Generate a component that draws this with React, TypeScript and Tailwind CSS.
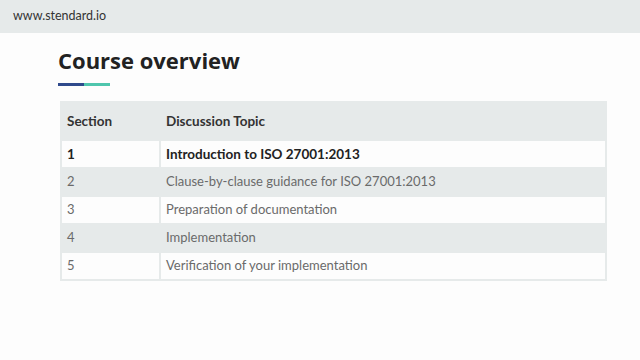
import React from 'react';

const rows = [
  { section: '1', topic: 'Introduction to ISO 27001:2013', bold: true },
  { section: '2', topic: 'Clause-by-clause guidance for ISO 27001:2013' },
  { section: '3', topic: 'Preparation of documentation' },
  { section: '4', topic: 'Implementation' },
  { section: '5', topic: 'Verification of your implementation' },
];

export default function App() {
  return (
    <div className="w-[640px] h-[360px] bg-[#fdfdfd] overflow-hidden" style={{ fontFamily: 'Lato, "Open Sans", sans-serif' }}>
      {/* Top bar */}
      <div className="h-[33px] bg-[#e6eaea] flex items-center pl-[13px]">
        <span className="text-[12.5px] text-[#333]">www.stendard.io</span>
      </div>

      <div className="pl-[58px] pt-[12px]">
        <h1 className="text-[22px] leading-[30px] font-bold text-[#222]" style={{ fontFamily: '"Open Sans", Lato, sans-serif' }}>
          Course overview
        </h1>
        <div className="flex mt-[8px]">
          <div className="w-[26px] h-[3px] bg-[#2f4a8c]" />
          <div className="w-[26px] h-[3px] bg-[#4fc6ad]" />
        </div>
      </div>

      {/* Table */}
      <div className="ml-[60px] mt-[15px] w-[547px] bg-[#e6eaea] p-[2px] flex flex-col gap-[2px]">
        <div className="flex gap-[2px] h-[36px] items-center text-[13.5px] font-bold text-[#333]">
          <div className="w-[97px] pl-[5px]">Section</div>
          <div className="flex-1 pl-[5px]">Discussion Topic</div>
        </div>
        {rows.map((r, i) => {
          const white = i % 2 === 0;
          const cell = white ? 'bg-[#fdfdfd]' : 'bg-[#e6eaea]';
          const txt = r.bold ? 'text-[13.5px] font-bold text-[#222]' : 'text-[13px] text-[#6a6a6a]';
          return (
            <div key={i} className={`flex gap-[2px] h-[26px] ${txt}`}>
              <div className={`w-[97px] pl-[5px] flex items-center ${cell}`}>{r.section}</div>
              <div className={`flex-1 pl-[5px] flex items-center ${cell}`}>{r.topic}</div>
            </div>
          );
        })}
      </div>
    </div>
  );
}
